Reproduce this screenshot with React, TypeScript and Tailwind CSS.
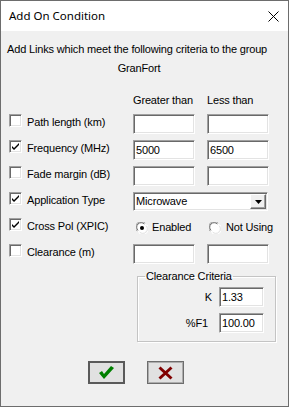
import React from "react";

const sunken =
  "border border-t-[#a0a0a0] border-l-[#a0a0a0] border-b-white border-r-white shadow-[inset_1px_1px_0_#696969,inset_-1px_-1px_0_#e3e3e3] bg-white";

function TextBox({ value, className }: { value?: string; className: string }) {
  return (
    <div className={`${sunken} ${className} flex items-center pl-[2px] overflow-hidden`}>
      {value}
    </div>
  );
}

function Check({ checked }: { checked: boolean }) {
  return (
    <div className={`${sunken} w-[13px] h-[13px] shrink-0 flex items-center justify-center`}>
      {checked && (
        <svg width="9" height="9" viewBox="0 0 9 9">
          <path d="M1 4 L3 6 L8 1 L8 3 L3 8 L1 6 Z" fill="#000" />
        </svg>
      )}
    </div>
  );
}

function Radio({ on }: { on: boolean }) {
  return (
    <svg width="12" height="12" viewBox="0 0 12 12" className="shrink-0">
      <circle cx="6" cy="6" r="5.5" fill="#fff" />
      <path d="M1.2 9.2 A5.2 5.2 0 0 1 9.2 1.2" stroke="#a0a0a0" strokeWidth="1" fill="none" />
      <path d="M2 8.4 A4.3 4.3 0 0 1 8.4 2" stroke="#696969" strokeWidth="1" fill="none" />
      <path d="M10.8 2.8 A5.2 5.2 0 0 1 2.8 10.8" stroke="#ffffff" strokeWidth="1" fill="none" />
      <path d="M10 3.6 A4.3 4.3 0 0 1 3.6 10" stroke="#e3e3e3" strokeWidth="1" fill="none" />
      {on && <circle cx="6" cy="6" r="2" fill="#000" />}
    </svg>
  );
}

function RowLabel({ checked, label }: { checked: boolean; label: string }) {
  return (
    <div className="w-[126px] shrink-0 flex items-start pl-[2px]">
      <div className="mt-[3px]">
        <Check checked={checked} />
      </div>
      <span className="ml-[5px] mt-[5px] leading-[13px] whitespace-nowrap">{label}</span>
    </div>
  );
}

export default function App() {
  return (
    <div className="w-[289px] h-[407px] border border-[#6d6d6d] bg-[#f0f0f0] flex flex-col text-black font-['Liberation_Sans',Arial,sans-serif] text-[11px] tracking-[-0.16px]">
      {/* Title bar */}
      <div className="h-[30px] bg-white flex items-center justify-between pl-[8px] pr-[9px] shrink-0">
        <span className="font-['Noto_Sans',sans-serif] text-[11.5px] tracking-normal text-black">
          Add On Condition
        </span>
        <svg width="11" height="11" viewBox="0 0 11 11">
          <path d="M0.5 0.5 L10.5 10.5 M10.5 0.5 L0.5 10.5" stroke="#000" strokeWidth="1" />
        </svg>
      </div>

      {/* Body */}
      <div className="flex flex-col pl-[6px] pt-[12px]">
        <div className="w-[264px] flex flex-col items-center">
          <div className="leading-[13px] whitespace-nowrap self-start">
            Add Links which meet the following criteria to the group
          </div>
          <div className="leading-[13px] mt-[6px]">GranFort</div>
        </div>

        <div className="flex mt-[19px] leading-[13px]">
          <div className="w-[126px]" />
          <div className="w-[74px]">Greater than</div>
          <div>Less than</div>
        </div>

        <div className="flex flex-col mt-[4px]">
          {/* Path length */}
          <div className="flex h-[26px] items-start">
            <RowLabel checked={false} label="Path length (km)" />
            <TextBox className="w-[62px] h-[20px] mt-[3px]" />
            <TextBox className="w-[62px] h-[20px] mt-[3px] ml-[12px]" />
          </div>
          {/* Frequency */}
          <div className="flex h-[26px] items-start">
            <RowLabel checked={true} label="Frequency (MHz)" />
            <TextBox value="5000" className="w-[62px] h-[20px] mt-[3px]" />
            <TextBox value="6500" className="w-[62px] h-[20px] mt-[3px] ml-[12px]" />
          </div>
          {/* Fade margin */}
          <div className="flex h-[26px] items-start">
            <RowLabel checked={false} label="Fade margin (dB)" />
            <TextBox className="w-[62px] h-[20px] mt-[3px]" />
            <TextBox className="w-[62px] h-[20px] mt-[3px] ml-[12px]" />
          </div>
          {/* Application Type */}
          <div className="flex h-[26px] items-start">
            <RowLabel checked={true} label="Application Type" />
            <div className={`${sunken} w-[135px] h-[19px] mt-[3px] flex items-stretch`}>
              <div className="flex-1 flex items-center pl-[2px]">Microwave</div>
              <div className="w-[16px] mt-[1px] mb-[1px] mr-[1px] bg-[#f0f0f0] border border-t-white border-l-white border-b-[#696969] border-r-[#696969] shadow-[inset_-1px_-1px_0_#a0a0a0] flex items-center justify-center">
                <svg width="7" height="4" viewBox="0 0 7 4">
                  <path d="M0 0 H7 L3.5 4 Z" fill="#000" />
                </svg>
              </div>
            </div>
          </div>
          {/* Cross Pol */}
          <div className="flex h-[26px] items-start">
            <RowLabel checked={true} label="Cross Pol (XPIC)" />
            <div className="flex items-center mt-[6px] h-[13px] w-[74px] pl-[3px]">
              <Radio on={true} />
              <span className="ml-[4px] leading-[13px]">Enabled</span>
            </div>
            <div className="flex items-center mt-[6px] h-[13px] pl-[2px]">
              <Radio on={false} />
              <span className="ml-[5px] leading-[13px]">Not Using</span>
            </div>
          </div>
          {/* Clearance */}
          <div className="flex h-[26px] items-start">
            <RowLabel checked={false} label="Clearance (m)" />
            <TextBox className="w-[62px] h-[20px] mt-[3px]" />
            <TextBox className="w-[62px] h-[20px] mt-[3px] ml-[12px]" />
          </div>
        </div>

        {/* Clearance Criteria group */}
        <fieldset className="ml-[130px] mt-[3px] w-[139px] h-[72px] border border-[#c4c4c4] shadow-[inset_1px_1px_0_#ffffff,1px_1px_0_#ffffff] flex flex-col">
          <legend className="ml-[7px] px-[1px] leading-[13px]">Clearance Criteria</legend>
          <div className="flex flex-col items-end pr-[11px]">
            <div className="flex items-center mt-[4px]">
              <span className="leading-[13px] mr-[7px]">K</span>
              <TextBox value="1.33" className="w-[45px] h-[20px]" />
            </div>
            <div className="flex items-center mt-[6px]">
              <span className="leading-[13px] mr-[11px]">%F1</span>
              <TextBox value="100.00" className="w-[45px] h-[20px]" />
            </div>
          </div>
        </fieldset>

        {/* Buttons */}
        <div className="flex mt-[19px] ml-[81px]">
          <button className="w-[37px] h-[23px] bg-[#e1e1e1] border-2 border-[#5a5a5a] flex items-center justify-center">
            <svg width="15" height="14" viewBox="0 0 15 14">
              <path d="M0 7 L3 5 L5 8 L12 0 L15 2 L5 13 Z" fill="#008000" />
            </svg>
          </button>
          <button className="ml-[22px] w-[37px] h-[23px] bg-[#e1e1e1] border border-[#6d6d6d] shadow-[inset_0_0_0_1px_#adadad] flex items-center justify-center">
            <svg width="15" height="14" viewBox="0 0 15 14">
              <path d="M1.5 1.5 L13.5 12.5 M13.5 1.5 L1.5 12.5" stroke="#800000" strokeWidth="3" />
            </svg>
          </button>
        </div>
      </div>
    </div>
  );
}
